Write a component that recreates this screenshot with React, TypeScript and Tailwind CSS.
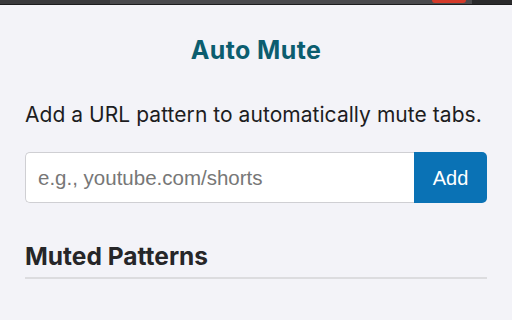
import React from 'react';

const TopStrip: React.FC = () => (
  <div className="h-[5px] flex bg-[#2f2f31] border-b border-[#1c1c1e]">
    <div className="w-[110px] bg-[#3a3a3c]" />
    <div className="flex-1 flex bg-[#4a4a4d]">
      <div className="w-[322px]" />
      <div className="w-[34px] h-[3px] rounded-b-md bg-[#d43a2a]" />
    </div>
    <div className="w-[40px] bg-[#2a2a2c]" />
  </div>
);

export default function App() {
  return (
    <div className="w-[512px] h-[320px] bg-[#f3f3f8] overflow-hidden font-['Inter',sans-serif]">
      <TopStrip />
      <div className="px-[25px]">
        <h1 className="mt-[30px] text-center text-[25px] leading-[30px] font-bold text-[#0b5d6f] tracking-[0.4px]">
          Auto Mute
        </h1>

        <p className="mt-[38px] text-[21px] leading-[24px] text-[#1d1d1f] whitespace-nowrap tracking-[0.05px]">
          Add a URL pattern to automatically mute tabs.
        </p>

        <div className="mt-[25px] flex h-[51px]">
          <input
            type="text"
            placeholder="e.g., youtube.com/shorts"
            className="flex-1 min-w-0 h-full bg-white border border-[#cfcfd3] border-r-0 rounded-l-[5px] px-[12px] text-[20.5px] font-['Liberation_Sans',Arial,sans-serif] text-[#333] placeholder:text-[#777] outline-none"
          />
          <button className="w-[73px] h-full bg-[#0a72b5] text-white rounded-r-[5px] text-[20px] font-['Liberation_Sans',Arial,sans-serif]">
            Add
          </button>
        </div>

        <h2 className="mt-[38px] text-[24.5px] leading-[30px] font-bold text-[#262628] pb-[6px] border-b-2 border-[#dcdcdf]">
          Muted Patterns
        </h2>
      </div>
    </div>
  );
}
